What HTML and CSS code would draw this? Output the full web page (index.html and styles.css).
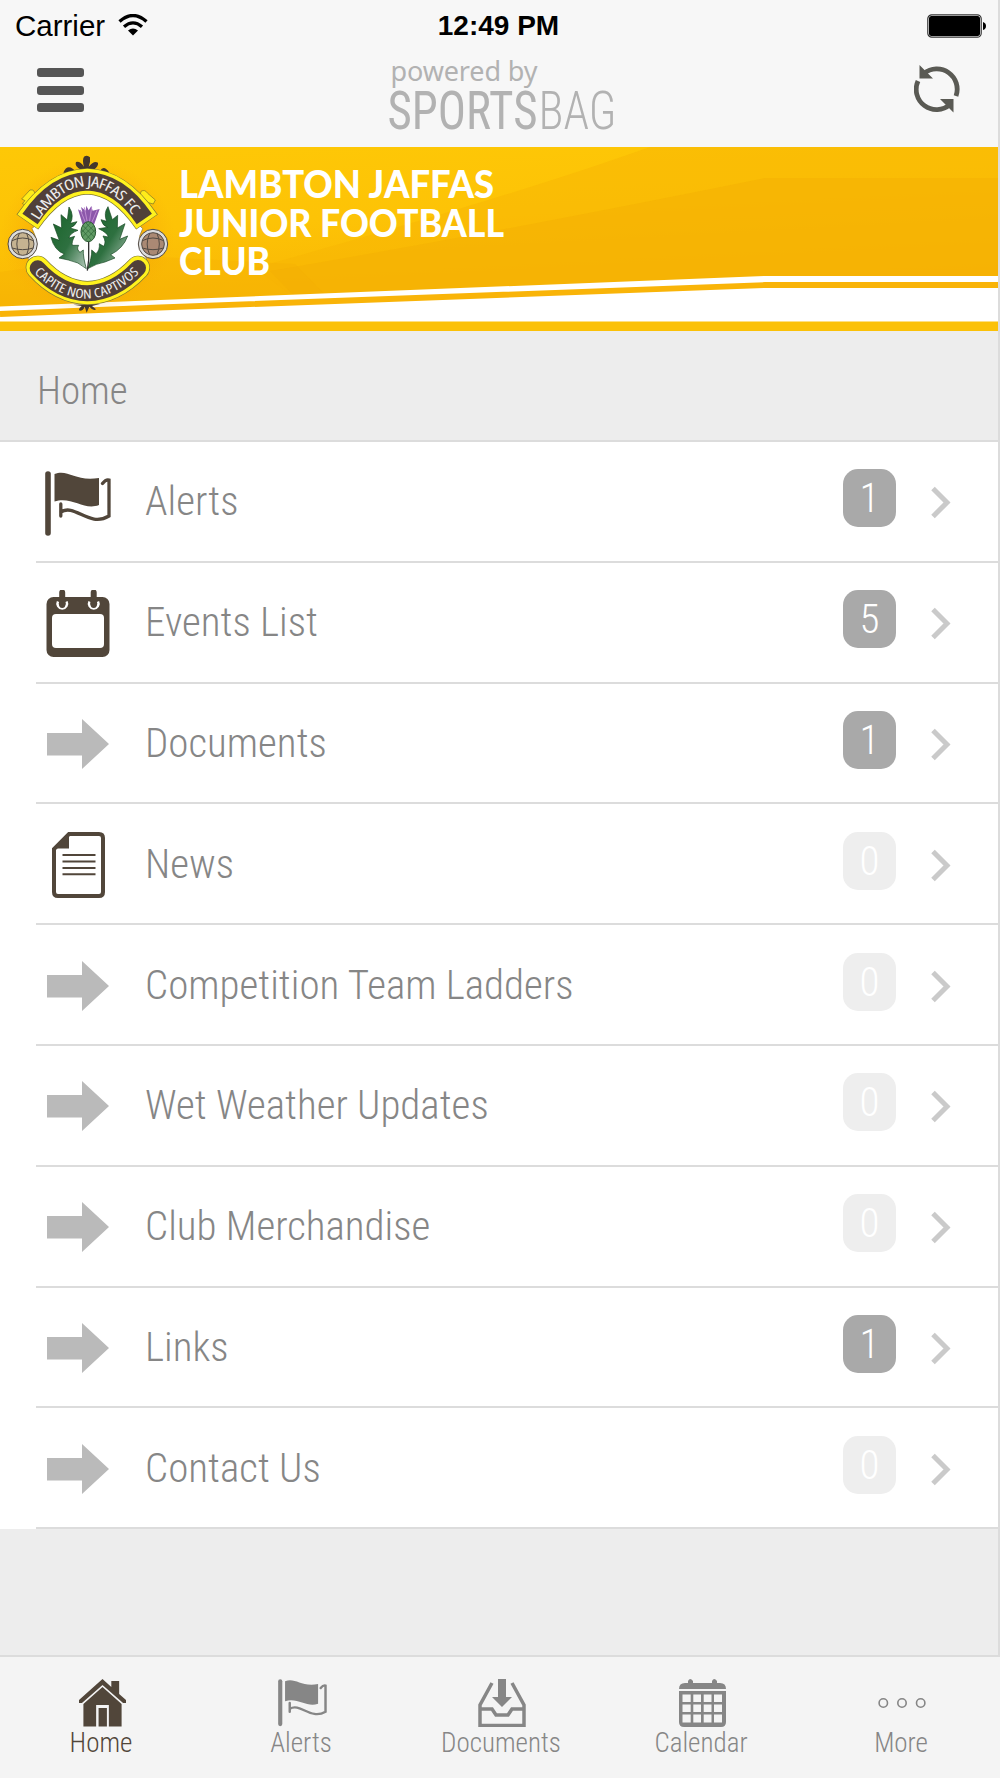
FILE: index.html
```html
<!DOCTYPE html>
<html lang="en">
    <head>
    <meta charset="UTF-8" />
    <meta name="viewport" content="width=device-width, initial-scale=1" />
    <title>Lambton Jaffas Junior Football Club</title>
    <link rel="stylesheet" href="styles.css">
    </head>
    <body>
    <!-- Shared icons -->
    <svg class="sprite" width="0" height="0">
        <symbol id="flag" viewBox="0 0 66 66">
        <path d="M3 3V62" fill="none" stroke="currentColor" stroke-width="5.6" stroke-linecap="round"/>
        <path d="M9.5 3C24-2 30 11 54 7V34C39 40 27 25 9.500 30.500Z" fill="currentColor"/>
        <path d="M15.800 33V45M15.800 41C30 32 44 57 64 45V9Q61 8 57.500 12.500" fill="none" stroke="currentColor" stroke-width="3.300" stroke-linecap="round"/>
        </symbol>
        <symbol id="arrow" viewBox="0 0 62 50">
        <path d="M0 14H35V0L62 25 35 50V36.500H0Z" fill="currentColor"/>
        </symbol>
        <symbol id="chevron" viewBox="0 0 20 33">
        <path d="M2 2.500 16 16.500 2 30.500" fill="none" stroke="currentColor" stroke-width="5"/>
        </symbol>
    </svg>

    <div class="app">
        <div class="screen">
        <header class="header">
            <div class="status">
            <div class="carrier">
                <span>Carrier</span>
                <svg class="wifi" viewBox="0 0 30 22">
                <path d="M1.500 7.500Q15-4.500 28.500 7.500M6 12.800Q15 5 24 12.800" fill="none" stroke="#000" stroke-width="3.300"/>
                <path d="M10 16.500Q15 12.500 20 16.500L15 21.500Z"/>
                </svg>
            </div>
            <div class="time">12:49 PM</div>
            <svg class="battery" viewBox="0 0 60 24">
                <rect x=".8" y=".8" width="53.400" height="22.400" rx="4" fill="#fff" stroke="#333" stroke-width="1.200"/>
                <rect x="2" y="2" width="51" height="20" rx="2.500"/>
                <path d="M56 8Q59 9 59 12T56 16Z"/>
            </svg>
            </div>
            <div class="navbar">
            <div class="menu"><i></i><i></i><i></i></div>
            <svg class="brand" viewBox="-3.5 -4 236 92">
                <g fill="#b2b2b2">
                <text class="powered" x="6" y="27" textLength="147">powered by</text>
                <text class="sports" x="3" y="75" textLength="150" lengthAdjust="spacingAndGlyphs">SPORTS</text>
                <text class="bag" x="154" y="75" textLength="78" lengthAdjust="spacingAndGlyphs">BAG</text>
                </g>
            </svg>
            <svg class="refresh" viewBox="0 0 46 48">
                <g fill="none" stroke="#5a5a54" stroke-width="4.800">
                <path d="M10 8.500A20.300 20.300 0 0 1 42 31"/>
                <path d="M4 16A20.300 20.300 0 0 0 36 39.500"/>
                </g>
                <path d="M5.500 0V13.500H19ZM39.500 47.500V34H26Z" fill="#5a5a54"/>
            </svg>
            </div>
        </header>

        <div class="banner">
            <svg viewBox="0 0 998 184">
            <defs>
                <linearGradient id="gold" x1="0" y1="0" x2=".3" y2="1">
                <stop offset="0" stop-color="#fec806"/>
                <stop offset=".45" stop-color="#fdc306"/>
                <stop offset="1" stop-color="#f7b104"/>
                </linearGradient>
                <radialGradient id="glow">
                <stop offset=".5" stop-color="#f39a06" stop-opacity=".55"/>
                <stop offset="1" stop-color="#f8a908" stop-opacity="0"/>
                </radialGradient>
                <linearGradient id="leaf" x1="0" y1="0" x2="1" y2="1">
                <stop offset="0" stop-color="#176328"/>
                <stop offset=".55" stop-color="#2e7040"/>
                <stop offset="1" stop-color="#b4c9bb"/>
                </linearGradient>
                <path id="topText" d="M103 234Q171 124 262 123Q357 126 427 242"/>
                <path id="botText" d="M106 394Q180 469 262 470Q345 466 422 386"/>
            </defs>
            <rect width="998" height="184" fill="url(#gold)"/>
            <path d="M650 0H998V140H770L300 155 255 121Q510 50 650 0Z" fill="#f8b604" opacity=".5"/>
            <path d="M765 31H998V140H770L300 155 270 124Q500 85 765 31Z" fill="#f4af04" opacity=".5"/>
            <path d="M0 125 120 108 295 117 330 153 0 162Z" fill="#f5ac05" opacity=".25"/>
            <path d="M0 159.500 160 153 765 129H998V175H0Z" fill="#fff"/>
            <path d="M0 167 160 160.500 765 138H998" fill="none" stroke="#f9b408" stroke-width="5.800"/>
            <rect y="174.500" width="998" height="9.500" fill="#fbc108"/>

            <!-- Club crest -->
            <g transform="translate(0 -7) scale(.33333)">
                <ellipse cx="262" cy="290" rx="262" ry="230" fill="url(#glow)"/>
                <g fill="#44372c">
                <path d="M190 98Q200 74 218 86L228 94 244 90Q222 78 228 66 240 62 252 80 246 60 252 50 262 44 270 52 272 64 266 80 282 60 294 68 296 80 280 90L300 92Q312 74 328 98Z"/>
                <path d="M220 494 245 498Q232 510 240 512 250 512 254 500L260 518 268 500Q280 514 288 508L276 498 300 492Z"/>
                </g>
                <g fill="#ffec1a" stroke="#777128" stroke-width="2">
                <path d="M65 177 90 150Q105 147 104 164L80 196 67 191 75 182Z"/>
                <path d="M423 154Q435 147 443 160L466 180 460 192 445 188 420 169Z"/>
                </g>
                <path d="M96 266Q145 220 178 155H350Q380 220 428 266 402 310 440 356L355 428H175L84 356Q124 310 96 266Z" fill="#fff" stroke="#887640" stroke-width="2"/>
                <g fill="none">
                <path d="M82 246Q165 126 262 124 358 126 441 246" stroke="#7c7536" stroke-width="79"/>
                <path d="M83 245Q165 126 262 124 358 126 440 245" stroke="#fff21e" stroke-width="75"/>
                <path d="M90 237Q165 126 262 124 358 126 433 237" stroke="#514039" stroke-width="55"/>
                <path d="M113 383Q180 456 262 459 345 456 414 383" stroke="#7c7536" stroke-width="72" stroke-linecap="round"/>
                <path d="M113 383Q180 456 262 459 345 456 414 383" stroke="#fff21e" stroke-width="68" stroke-linecap="round"/>
                <path d="M113 385Q180 458 262 460 345 457 414 384" stroke="#514039" stroke-width="48" stroke-linecap="round"/>
                </g>
                <g class="crest-text">
                <text dy="16" font-size="44"><textPath href="#topText" textLength="385" lengthAdjust="spacingAndGlyphs">LAMBTON JAFFAS FC</textPath></text>
                <text dy="6" font-size="38"><textPath href="#botText" textLength="352" lengthAdjust="spacingAndGlyphs">CAPITE NON CAPTIVOS</textPath></text>
                </g>
                <!-- Thistle -->
                <g fill="url(#leaf)" stroke="#14451f" stroke-width="2">
                <path d="M259 386Q235 365 205 360L177 354 193 342Q163 332 153 292L178 301 160 252 185 264 183 224 202 240 207 201Q224 226 211 250L231 245Q224 259 210 264L234 271Q209 280 207 294L224 289Q214 306 217 316L236 316Q228 328 240 337L250 330Q249 351 259 386Z"/>
                <path d="M263 386Q290 370 315 366L345 354 332 344Q370 325 383 288L359 298 375 251 352 264 353 226 337 239 324 200Q310 220 320 244L303 239Q307 256 322 262L296 266Q323 279 325 291L309 288Q320 306 311 319L298 311Q300 330 288 341L275 330Q276 354 263 386Z"/>
                </g>
                <path d="M266 295V360L262 392" stroke="#333" stroke-width="4" fill="none"/>
                <path d="M234 208 247 217 243 201 257 212 259 197 266 211 274 198 278 212 299 207 282 254H248Z" fill="#8b57aa"/>
                <path d="M241 210 256 247M253 202 262 247M275 202 268 248M291 211 275 248" stroke="#bd8bd0" stroke-width="3"/>
                <ellipse cx="265" cy="275" rx="22" ry="30" fill="#619b65" stroke="#26562d" stroke-width="3"/>
                <path d="M249 257 283 291M245 268 273 300M258 249 286 278M281 257 247 291M286 268 257 300M271 249 244 278" stroke="#2e6337" stroke-width="2"/>
                <!-- Footballs -->
                <g stroke="#514942" stroke-width="3">
                <circle cx="68" cy="312" r="44" fill="#ddd"/>
                <circle cx="68" cy="312" r="34" fill="#c6b391"/>
                <path d="M36 302Q68 286 100 302M36 324Q68 334 100 324M58 280Q43 312 58 344M80 280Q94 312 80 344" fill="none"/>
                <circle cx="459" cy="312" r="44" fill="#ddd"/>
                <circle cx="459" cy="312" r="34" fill="#aa8974"/>
                <path d="M427 302Q459 286 491 302M427 324Q459 334 491 324M449 280Q434 312 449 344M471 280Q485 312 471 344" fill="none"/>
                </g>
            </g>

            <g class="club-name">
                <text x="179" y="51" textLength="315" lengthAdjust="spacingAndGlyphs">LAMBTON JAFFAS</text>
                <text x="179" y="89.500" textLength="325" lengthAdjust="spacingAndGlyphs">JUNIOR FOOTBALL</text>
                <text x="179" y="128" textLength="91" lengthAdjust="spacingAndGlyphs">CLUB</text>
            </g>
            </svg>
        </div>

        <h1 class="title">Home</h1>

        <ul class="list">
            <li>
            <span class="icon dark"><svg class="flag" width="66" height="66"><use href="#flag"/></svg></span>
            <span class="label">Alerts</span><span class="badge">1</span>
            <svg class="chevron"><use href="#chevron"/></svg>
            </li>
            <li>
            <span class="icon dark">
                <svg width="64" height="67" viewBox="0 0 64 67">
                <rect x=".5" y="7" width="63" height="60" rx="7" fill="currentColor"/>
                <rect x="6" y="24" width="52" height="34" rx="4" fill="#fff"/>
                <g fill="none" stroke="#fff" stroke-width="2.500">
                    <path d="M12 11.500A4.800 4.800 0 1 0 20.500 11.500M43.500 11.500A4.800 4.800 0 1 0 52 11.500"/>
                </g>
                <path d="M16.200 2.500V15M47.700 2.500V15" stroke="currentColor" stroke-width="6" stroke-linecap="round"/>
                </svg>
            </span>
            <span class="label">Events List</span><span class="badge">5</span>
            <svg class="chevron"><use href="#chevron"/></svg>
            </li>
            <li>
            <span class="icon"><svg width="62" height="50"><use href="#arrow"/></svg></span>
            <span class="label">Documents</span><span class="badge">1</span>
            <svg class="chevron"><use href="#chevron"/></svg>
            </li>
            <li>
            <span class="icon dark">
                <svg width="53" height="66" viewBox="0 0 53 66">
                <path d="M17 2H47Q51 2 51 6V60Q51 64 47 64H6Q2 64 2 60V17Z" fill="none" stroke="currentColor" stroke-width="4"/>
                <path d="M17 1V16.500H1Z" fill="currentColor"/>
                <path d="M10.500 23H43.500M10.500 29.500H43.500M10.500 36H43.500M10.500 42.300H43.500" stroke="currentColor" stroke-width="2"/>
                </svg>
            </span>
            <span class="label">News</span><span class="badge empty">0</span>
            <svg class="chevron"><use href="#chevron"/></svg>
            </li>
            <li>
            <span class="icon"><svg width="62" height="50"><use href="#arrow"/></svg></span>
            <span class="label">Competition Team Ladders</span><span class="badge empty">0</span>
            <svg class="chevron"><use href="#chevron"/></svg>
            </li>
            <li>
            <span class="icon"><svg width="62" height="50"><use href="#arrow"/></svg></span>
            <span class="label">Wet Weather Updates</span><span class="badge empty">0</span>
            <svg class="chevron"><use href="#chevron"/></svg>
            </li>
            <li>
            <span class="icon"><svg width="62" height="50"><use href="#arrow"/></svg></span>
            <span class="label">Club Merchandise</span><span class="badge empty">0</span>
            <svg class="chevron"><use href="#chevron"/></svg>
            </li>
            <li>
            <span class="icon"><svg width="62" height="50"><use href="#arrow"/></svg></span>
            <span class="label">Links</span><span class="badge">1</span>
            <svg class="chevron"><use href="#chevron"/></svg>
            </li>
            <li>
            <span class="icon"><svg width="62" height="50"><use href="#arrow"/></svg></span>
            <span class="label">Contact Us</span><span class="badge empty">0</span>
            <svg class="chevron"><use href="#chevron"/></svg>
            </li>
        </ul>
        </div>

        <!-- Bottom tabs -->
        <nav class="tabs">
        <a class="tab active">
            <svg width="47" height="48" viewBox="0 0 48 48" preserveAspectRatio="none">
            <path d="M0 21 24 0 33 8V2H41V15L48 21V24H45L24 6 3 24H0Z" fill="currentColor"/>
            <path d="M4.500 25 24 8 43.500 25V47.500H30.500V26H17.500V47.500H4.500Z" fill="currentColor"/>
            <path d="M20 29H28.500V47.500H20Z" fill="currentColor"/>
            </svg>
            <span>Home</span>
        </a>
        <a class="tab">
            <svg width="49" height="48" viewBox="0 0 66 66" preserveAspectRatio="none"><use href="#flag"/></svg>
            <span>Alerts</span>
        </a>
        <a class="tab">
            <svg width="48" height="48" viewBox="0 0 48 48">
            <g fill="none" stroke="currentColor" stroke-width="3.500">
                <path d="M14 4 2 26V46.500H46V26L34 4"/>
                <path d="M2 30H14L18 36H30L34 30H46"/>
            </g>
            <path d="M20 0H28V18H34L24 28 14 18H20Z" fill="currentColor"/>
            </svg>
            <span>Documents</span>
        </a>
        <a class="tab">
            <svg width="47" height="48" viewBox="0 0 47 48">
            <path d="M0 10Q0 4 6 4H9V2Q11-2 14 2V4H33V2Q35-2 38 2V4H41Q47 4 47 10Z" fill="currentColor"/>
            <path fill-rule="evenodd" d="M0 12H47V43Q47 48 42 48H5Q0 48 0 43ZM3.500 15.500V23H11.700V15.500ZM14.300 15.500V23H22V15.500ZM24.700 15.500V23H32.500V15.500ZM35 15.500V23H43V15.500ZM3.500 25.500V33H11.700V25.500ZM14.300 25.500V33H22V25.500ZM24.700 25.500V33H32.500V25.500ZM35 25.500V33H43V25.500ZM3.500 35.500V43.500H11.700V35.500ZM14.300 35.500V43.500H22V35.500ZM24.700 35.500V43.500H32.500V35.500ZM35 35.500V43.500H43V35.500Z" fill="currentColor"/>
            </svg>
            <span>Calendar</span>
        </a>
        <a class="tab">
            <svg width="48" height="48" viewBox="0 0 48 48">
            <g fill="none" stroke="currentColor" stroke-width="1.600">
                <circle cx="5.300" cy="24" r="4.200"/><circle cx="24" cy="24" r="4.200"/><circle cx="42.700" cy="24" r="4.200"/>
            </g>
            </svg>
            <span>More</span>
        </a>
        </nav>
    </div>
    </body>
</html>
```
FILE: styles.css
```css
* {
box-sizing: border-box;
}
body {
margin: 0;
background: #ededed;
color: #868686;
font-family: "Roboto Condensed", Roboto, sans-serif;
font-stretch: 75%;
font-weight: 300;
}
svg {
display: block;
flex: none;
}
.sprite {
position: absolute;
}
.app {
display: flex;
flex-direction: column;
width: 1000px;
height: 1778px;
overflow: hidden;
}
.screen {
flex: 1;
min-height: 0;
border-right: 2px solid #dcdcdc;
}

/* Header */
.header {
height: 147px;
background: #f7f7f7;
}
.status {
display: grid;
grid-template-columns: 1fr auto 1fr;
align-items: center;
height: 50px;
padding: 0 11px 0 15px;
color: #000;
font: 29.5px/52px "Liberation Sans", Arial, sans-serif;
font-stretch: 100%;
}
.carrier {
display: flex;
align-items: center;
gap: 13px;
}
.wifi {
width: 30px;
height: 22px;
margin-bottom: 2px;
}
.time {
margin-right: 5px;
font-weight: bold;
font-size: 28px;
}
.battery {
width: 60px;
height: 24px;
justify-self: end;
}
.navbar {
display: grid;
grid-template-columns: 1fr auto 1fr;
padding: 0 38px 0 37px;
}
.menu {
display: flex;
flex-direction: column;
gap: 8.500px;
padding-top: 18px;
}
.menu i {
width: 47px;
height: 9px;
border-radius: 3px;
background: #555;
}
.brand {
width: 236px;
height: 92px;
}
.powered {
font: 27px "Noto Sans", sans-serif;
}
.sports, .bag {
font-family: "Roboto Condensed", Roboto, sans-serif;
font-size: 53px;
font-weight: 400;
}
.bag {
font-weight: 300;
}
.refresh {
width: 46px;
height: 48px;
margin-top: 15px;
justify-self: end;
}

/* Club banner */
.banner svg {
width: 998px;
height: 184px;
}
.club-name {
fill: #fff;
font-family: Lato, sans-serif;
font-stretch: 100%;
font-size: 37px;
font-weight: 900;
}
.crest-text {
fill: #eee;
font-family: "Open Sans", sans-serif;
font-stretch: 85%;
font-weight: 500;
}

.title {
height: 111px;
margin: 0;
padding: 8px 37px 0;
border-bottom: 2px solid #dcdcdc;
font-size: 39px;
font-weight: 300;
line-height: 104px;
}

/* Menu rows */
.list {
margin: 0;
padding: 0 0 0 36px;
list-style: none;
background: #fff;
}
.list li {
display: flex;
align-items: center;
height: 120.8px;
padding-right: 47px;
border-bottom: 2px solid #dcdcdc;
}
.icon {
display: flex;
justify-content: center;
width: 84px;
padding-top: 2px;
margin-right: 25px;
color: #bababa;
}
.icon.dark {
color: #51463a;
}
.flag {
margin-top: 3px;
}
.label {
flex: 1;
font-size: 41px;
}
.badge {
width: 53px;
height: 58px;
margin: 0 35px 6px 0;
border-radius: 15px;
background: #a9a9a9;
color: #fff;
font-size: 41px;
line-height: 59px;
text-align: center;
}
.badge.empty {
background: #eee;
}
.chevron {
width: 20px;
height: 33px;
margin-top: 3px;
color: #cacaca;
}

/* Tab bar */
.tabs {
display: grid;
grid-template-columns: repeat(5, 1fr);
width: 1001px;
height: 123px;
padding: 22px 0 0 1px;
border-top: 2px solid #dcdcdc;
background: #f4f4f4;
}
.tab {
display: flex;
flex-direction: column;
align-items: center;
color: #868686;
font-size: 27px;
line-height: 32px;
}
.tab svg {
margin-left: 2px;
}
.tab.active {
color: #51463a;
}
```
